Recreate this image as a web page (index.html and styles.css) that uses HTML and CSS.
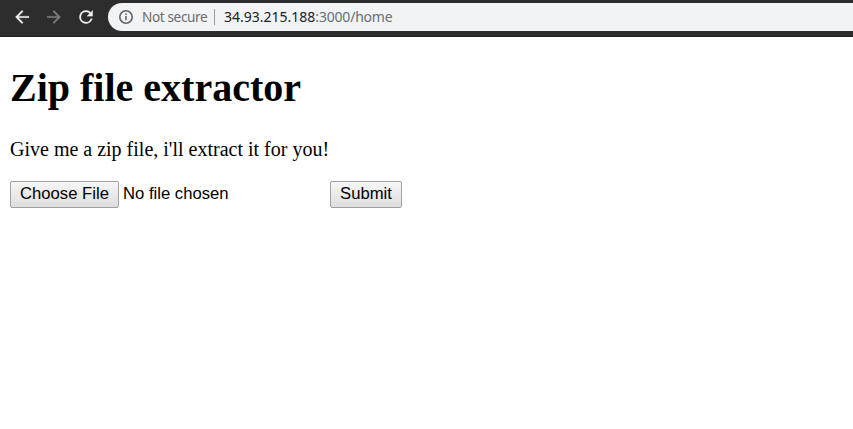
FILE: index.html
```html
<!DOCTYPE html>
<html lang="en">
<head>
<meta charset="utf-8">
<title>Zip file extractor</title>
<link rel="stylesheet" href="styles.css">
</head>
<body>
<header class="toolbar">
  <svg class="nav" viewBox="0 0 24 24"><path d="M20.4 11H7.83l5.59-5.59L12 4l-8 8 8 8 1.41-1.41L7.83 13H20.4z"/></svg>
  <svg class="nav nav-off" viewBox="0 0 24 24"><path d="M12 4l-1.41 1.41L16.17 11H3.6v2h12.57l-5.58 5.59L12 20l8-8z"/></svg>
  <svg class="nav" viewBox="0 0 24 24"><path d="M17.65 6.35A7.96 7.96 0 0 0 12 4a8 8 0 1 0 7.73 10h-2.08A6 6 0 1 1 12 6c1.66 0 3.14.69 4.22 1.78L13 11h7V4z"/></svg>
  <div class="address">
    <svg class="info" viewBox="0 0 16 16"><circle cx="8" cy="8" r="6.2"/><path d="M8 7v4.3M8 4.5v1.6"/></svg>
    <span class="secure">Not secure</span>
    <span class="divider"></span>
    <span class="url"><span class="host">34.93.215.188</span><span class="path">:3000/home</span></span>
  </div>
</header>
<main class="page">
  <h1>Zip file extractor</h1>
  <p>Give me a zip file, i'll extract it for you!</p>
  <form class="upload">
    <button type="button" class="button choose">Choose File</button>
    <span class="filename">No file chosen</span>
    <button type="button" class="button submit">Submit</button>
  </form>
</main>
</body>
</html>
```
FILE: styles.css
```css
* { box-sizing: border-box; }
body { margin: 0; background: #fff; color: #000; font-family: "Liberation Serif", serif; overflow: hidden; }
.toolbar { display: flex; align-items: flex-start; height: 37px; padding: 3px 0 0 12px; background: #2d2d2d; border-bottom: 1px solid #222; }
.nav { flex: none; width: 20px; height: 20px; margin: 4px 12px 0 0; fill: #f1f1f1; stroke: #f1f1f1; stroke-width: .25; }
.nav-off { fill: #7c7c7c; stroke: #7c7c7c; }
.address { flex: 1; display: flex; align-items: center; height: 28px; padding-left: 10px; border-radius: 14px 0 0 14px; background: #f1f3f4; color: #6b6e72; font: 14px/20px "Noto Sans", sans-serif; white-space: nowrap; }
.info { width: 16px; height: 16px; fill: none; stroke: #5f6368; stroke-width: 1.6; }
.secure { width: 66px; margin-left: 8px; font-size: 13.6px; letter-spacing: -.38px; }
.divider { width: 1px; height: 16px; margin: 0 9px 0 6px; background: #9a9da0; }
.host { color: #202124; }
.path { letter-spacing: -.2px; }
.page { padding: 0 10px; }
h1 { margin: 28px 0 0; font-size: 40px; line-height: 46px; }
p { margin: 27px 0 0; font-size: 20px; line-height: 23px; }
.upload { display: flex; align-items: center; margin-top: 20px; font: 16.667px/19px "Liberation Sans", sans-serif; }
.button { height: 27px; padding: 0 0 3px; border: 1px solid #a0a0a0; border-radius: 2px; background: linear-gradient(#f6f6f6, #dedede); color: #000; font: inherit; white-space: nowrap; }
.choose { width: 109px; }
.submit { width: 72px; }
.filename { width: 207px; margin-left: 4px; padding-bottom: 3px; }
```
